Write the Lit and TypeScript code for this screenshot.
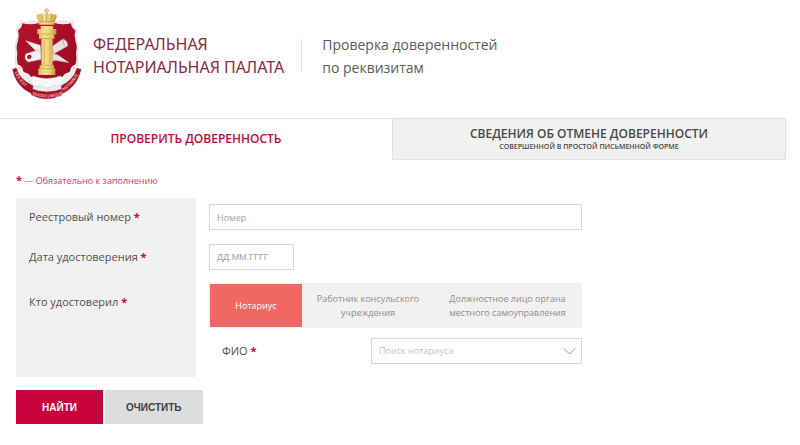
import { LitElement, html, css } from "lit";
import { customElement, state } from "lit/decorators.js";

@customElement("notary-crest")
class NotaryCrest extends LitElement {
  static styles = css`
    :host { display: block; flex: none; }
    svg { display: block; width: 70px; height: 92px; }
    .motto { font: bold 13px "Liberation Sans", sans-serif; fill: #eab0a8; }
  `;
  render() {
    return html`<svg viewBox="35 24 210 276" role="img" aria-label="Герб">
      <defs>
        <linearGradient id="gold" x1="0" x2="1" y1="0" y2="0">
          <stop offset="0" stop-color="#dcb95e" />
          <stop offset=".4" stop-color="#f5e08e" />
          <stop offset=".7" stop-color="#e8cb70" />
          <stop offset="1" stop-color="#c39a45" />
        </linearGradient>
        <linearGradient id="red" x1="0" x2="1" y1="0" y2="1">
          <stop offset="0" stop-color="#b5132c" />
          <stop offset="1" stop-color="#9c0a24" />
        </linearGradient>
      </defs>
      <path fill="#ececec" stroke="#cfcacb" stroke-width="1.5" d="M60 62 Q70 70 84 64 Q98 60 112 66 L166 66 Q180 60 194 64 Q208 70 218 62 Q216 78 229 88 Q224 104 229 120 Q236 140 231 158 Q235 180 231 206 Q214 240 190 256 L170 278 L108 278 L90 256 Q58 238 46 206 Q42 180 47 158 Q42 140 49 120 Q54 104 49 88 Q62 78 60 62 Z" />
      <path fill="url(#red)" d="M66 70 Q90 76 116 69 L162 69 Q188 76 212 70 Q212 82 225 91 Q220 106 225 122 Q232 140 227 158 Q232 190 218 206 Q204 226 176 236 L102 236 Q74 226 60 206 Q46 190 51 158 Q46 140 53 122 Q58 106 53 91 Q66 82 66 70 Z" />
      <path fill="#f7f7f7" stroke="#cbc6c8" stroke-width="1.5" d="M90 234 Q96 224 110 232 Q139 240 168 232 Q182 224 188 234 Q192 246 180 256 Q168 262 158 256 Q139 272 120 256 Q108 262 98 256 Q86 246 90 234 Z" />
      <path fill="none" stroke="#f6f4f4" stroke-width="6" stroke-linecap="round" d="M47 200 Q56 192 64 206 Q64 220 78 222 Q90 228 92 242 M231 200 Q222 192 214 206 Q214 220 200 222 Q188 228 186 242" />
      <path fill="#f2f1f1" stroke="#c5bec0" stroke-width="1.5" d="M76 122 L120 136 L122 160 L104 150 Z M76 162 L121 147 L122 178 L84 186 Q70 178 76 162 Z" />
      <path fill="#e6e3e4" stroke="#bab3b6" stroke-width="1.5" d="M156 139 L188 117 Q202 121 202 138 L158 163 Z M156 159 L174 166 L206 188 L165 181 L156 184 Z" />
      <path fill="none" stroke="#999" stroke-width="2" d="M188 118 Q184 130 196 140" />
      <path fill="#b51531" d="M82 166 Q90 161 94 168 Q93 178 84 178 Q77 174 82 166 Z" />
      <path fill="url(#gold)" stroke="#c9a55a" stroke-width="1" d="M117 74 L109 49 Q109 41 118 44 Q124 38 133 43 Q139 37 145 43 Q154 38 160 44 Q169 41 169 49 L161 74 Z" />
      <path fill="#ecd17d" stroke="#b8924a" stroke-width="1" d="M136 26 H142 V30 H146 V34 H142 V40 H136 V34 H132 V30 H136 Z" />
      <g fill="none" stroke="#a5813f" stroke-width="2">
        <path d="M117 63 Q139 70 161 63 M123 46 L127 61 M139 43 V64 M155 46 L151 61" />
      </g>
      <path fill="url(#gold)" d="M121 78 H159 V87 H168 V102 H162 V116 H116 V102 H111 V87 H121 Z" />
      <path fill="url(#gold)" d="M123 116 H157 V196 H161 V206 H165 V225 H114 V206 H118 V196 H123 Z" />
      <path fill="none" stroke="#c9a04c" stroke-width="2" d="M112 102 H167 M116 116 H162 M119 196 H160 M115 206 H164 M132 120 V192 M149 120 V192" />
      <path fill="#a80f27" stroke="#8d1426" stroke-width="1.5" d="M37 208 L48 205 Q57 239 98 258 L93 280 Q47 259 37 208 Z M242 208 L230 205 Q221 239 183 258 L187 280 Q230 260 242 208 Z M92 266 Q139 286 188 266 L184 285 Q139 307 94 285 Z" />
      <path id="left" fill="none" d="M43 217 Q58 255 94 272" />
      <path id="mid" fill="none" d="M95 283 Q139 302 186 283" />
      <path id="right" fill="none" d="M190 272 Q224 251 238 215" />
      <text class="motto"><textPath href="#left">LEX EST</textPath></text>
      <text class="motto"><textPath href="#mid">QUODCUMQUE</textPath></text>
      <text class="motto"><textPath href="#right">NOTAMUS</textPath></text>
    </svg>`;
  }
}

@customElement("app-root")
class AppRoot extends LitElement {
  static styles = css`
    :host {
      display: block;
      background: #fff;
      color: #505050;
      font: 11px/16px "Open Sans", "Noto Sans", sans-serif;
    }
    * { box-sizing: border-box; }
    button, input, select { font: inherit; margin: 0; border-radius: 0; }
    .header { display: flex; align-items: flex-start; padding: 8px 12px 18px; }
    .name, .subject { margin: 0; font-weight: 400; line-height: 23px; }
    .name { padding: 25px 17px 0 11px; color: #8a2848; font-size: 16px; font-family: "Noto Sans", sans-serif; }
    .subject { padding: 25px 0 0 20px; color: #5c5c5c; font-size: 14px; }
    .rule { width: 1px; height: 34px; margin-top: 30px; background: #e6e6e6; }
    .tabs { display: flex; margin-right: 14px; }
    .tab {
      flex: 1; height: 42px; padding: 0; border: 1px solid #e2e2e2; border-left-width: 0;
      background: #f1f1f1; color: #484848; font-size: 12px; line-height: 14px; font-weight: 600;
    }
    .tab.active { background: #fff; color: #c8073f; border-bottom-color: #fff; }
    .tab small { display: block; font-size: 7px; line-height: 11px; }
    .content { padding: 12px 16px 20px; }
    .note { margin: 0 0 9px; color: #cf3c66; font-size: 9px; }
    .star { color: #c8073f; font-size: 11px; font-weight: 700; }
    .form { max-width: 566px; }
    .row { display: grid; grid-template-columns: 180px 1fr; column-gap: 13px; }
    .caption { padding: 11px 13px; background: #f1f1f1; }
    .field { padding: 6px 0 8px; }
    .box {
      display: block; width: 100%; height: 26px; padding: 0 7px; border: 1px solid #d8d8d8;
      background: #fff; color: #505050; font-size: 9px; outline: 0;
    }
    .box::placeholder { color: #a3a3a3; opacity: 1; }
    .date { width: 85px; font-family: "Liberation Sans", Arial, sans-serif; }
    .who .caption { padding-top: 16px; }
    .who .field { padding: 5px 0 13px; }
    .options { display: grid; grid-template-columns: 94px 130px 1fr; margin-bottom: 10px; background: #f1f1f1; }
    .option {
      display: flex; align-items: center; justify-content: center; height: 45px;
      border: 1px solid #f1f1f1; color: #8e8e8e; font-size: 9px; line-height: 14px; text-align: center; cursor: pointer;
    }
    .option.on { background: #f16763; color: #fff; }
    .option input { appearance: none; width: 0; height: 0; margin: 0; }
    .person { display: grid; grid-template-columns: 149px 1fr; align-items: center; }
    .person label { padding-left: 13px; }
    .picker { position: relative; margin-left: 13px; }
    .picker .box { appearance: none; color: #c4c4c4; }
    .chevron { position: absolute; right: 6px; top: 9px; width: 13px; height: 9px; pointer-events: none; }
    .actions { display: flex; gap: 2px; margin-top: 13px; }
    .action {
      height: 34px; padding: 0 21px; border: 0; background: #ddd; color: #404040;
      font: bold 10px "Liberation Sans", Arial, sans-serif;
    }
    .find { padding: 0 26px; background: #c8023c; color: #fff; }
  `;

  @state() tab = 0;
  @state() certifier = 0;

  star = html`<span class="star">*</span>`;
  certifiers = [
    html`Нотариус`,
    html`Работник консульского<br />учреждения`,
    html`Должностное лицо органа<br />местного самоуправления`,
  ];

  tabClass(i: number) {
    return this.tab === i ? "tab active" : "tab";
  }

  render() {
    return html`
      <header class="header">
        <notary-crest></notary-crest>
        <h1 class="name">ФЕДЕРАЛЬНАЯ<br />НОТАРИАЛЬНАЯ ПАЛАТА</h1>
        <div class="rule"></div>
        <h2 class="subject">Проверка доверенностей<br />по реквизитам</h2>
      </header>
      <nav class="tabs">
        <button class=${this.tabClass(0)} @click=${() => (this.tab = 0)}>ПРОВЕРИТЬ ДОВЕРЕННОСТЬ</button>
        <button class=${this.tabClass(1)} @click=${() => (this.tab = 1)}>
          СВЕДЕНИЯ ОБ ОТМЕНЕ ДОВЕРЕННОСТИ<small>СОВЕРШЕННОЙ В ПРОСТОЙ ПИСЬМЕННОЙ ФОРМЕ</small>
        </button>
      </nav>
      <main class="content">
        <p class="note">${this.star} — Обязательно к заполнению</p>
        <form class="form" @submit=${(e: Event) => e.preventDefault()}>
          <div class="row">
            <label class="caption" for="number">Реестровый номер ${this.star}</label>
            <div class="field"><input class="box" id="number" placeholder="Номер" /></div>
          </div>
          <div class="row">
            <label class="caption" for="date">Дата удостоверения ${this.star}</label>
            <div class="field"><input class="box date" id="date" placeholder="ДД.ММ.ГГГГ" /></div>
          </div>
          <div class="row who">
            <div class="caption" id="who">Кто удостоверил ${this.star}</div>
            <div class="field">
              <div class="options" role="radiogroup" aria-labelledby="who">
                ${this.certifiers.map(
                  (text, i) => html`<label class=${this.certifier === i ? "option on" : "option"}>
                    <input type="radio" name="who" .checked=${this.certifier === i} @change=${() => (this.certifier = i)} />
                    <span>${text}</span>
                  </label>`
                )}
              </div>
              <div class="person">
                <label for="person">ФИО ${this.star}</label>
                <div class="picker">
                  <select class="box" id="person"><option>Поиск нотариуса</option></select>
                  <svg class="chevron" viewBox="0 0 13 9" aria-hidden="true">
                    <path d="M1 1.5 L6.5 7 L12 1.5" fill="none" stroke="#999" />
                  </svg>
                </div>
              </div>
            </div>
          </div>
          <div class="actions">
            <button class="action find" type="submit">НАЙТИ</button>
            <button class="action" type="reset">ОЧИСТИТЬ</button>
          </div>
        </form>
      </main>
    `;
  }
}
